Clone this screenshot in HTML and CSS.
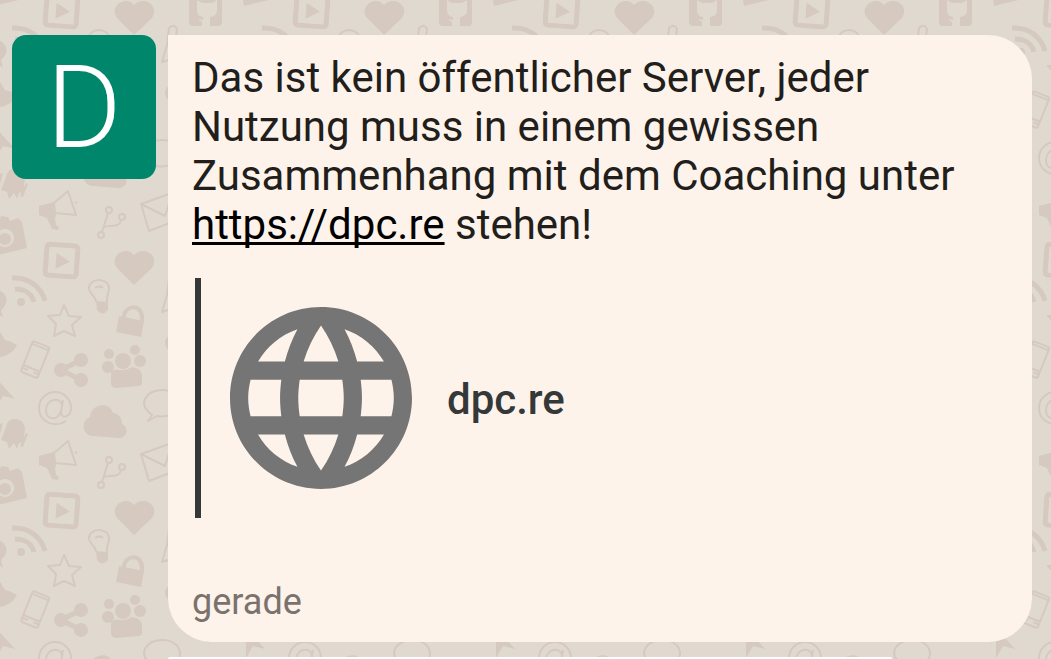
FILE: index.html
```html
<!DOCTYPE html>
<html lang="de">
<head>
    <meta charset="UTF-8">
    <meta name="viewport" content="width=device-width, initial-scale=1.0">
    <title>Chat</title>
    <link rel="stylesheet" href="styles.css">
</head>
<body>
    <svg class="wallpaper" aria-hidden="true">
        <defs>
            <g id="doodles">
                <!-- megaphone -->
                <path class="fill" d="M39 206l15-4 2 14-1 2 1 7 3 2-1 3-6-1-5-11-8-3z"/>
                <path class="line" d="M54 203l14-12 8 24-21-2zM75 202l2 1"/>
                <!-- branch -->
                <g class="line">
                    <circle cx="109" cy="210" r="3"/>
                    <circle cx="122" cy="217" r="3"/>
                    <circle cx="101" cy="235" r="3"/>
                    <path d="M108 213l-6 19M104 227c5-2 16 1 17-7"/>
                </g>
                <!-- envelope -->
                <path class="line" d="M141 204l31-11 8 26-31 12zM141 204l24 12 7-23"/>
                <!-- camera -->
                <path class="fill" fill-rule="evenodd" d="M-11 224l10-3 2-5 7 1 2 4 8-3 4 4 5 26-33 8zM5 229a9 9 0 1 0 .1 0zM5 233a6 6 0 1 1-.1 0z"/>
                <!-- play -->
                <g transform="rotate(4 61 261)">
                    <rect class="thick" x="46" y="245" width="31" height="31" rx="3"/>
                    <path class="fill" d="M56 253v16l14-8z"/>
                </g>
                <!-- heart -->
                <path class="fill" d="M134 285l-16-16c-8-9 0-18 8-18 4 0 6 2 8 4 3-3 5-4 9-4 8 0 15 8 9 17z"/>
                <!-- wifi -->
                <path class="thick" d="M12 278c17-1 29 9 33 23M15 289c10 0 17 5 19 13"/>
                <circle class="fill" cx="21" cy="302" r="4"/>
                <!-- bulb -->
                <path class="line" d="M96 302c0-6-7-8-7-14a10 8 0 0 1 20 0c0 6-3 8-2 14M95 288c3-2 6-2 8 0"/>
                <path class="fill" d="M96 301l12 1v8q-6 7-11 0z"/>
                <!-- lock -->
                <path class="fill" d="M119 316l25 5-3 16-25-5z"/>
                <path class="thin-thick" d="M124 318c-1-12 17-16 18-1v5"/>
                <!-- star -->
                <path class="line" d="M64 305l5 11 12 1-9 8 3 11-11-5-10 5 2-12-8-8 12-1z"/>
                <!-- phone -->
                <g transform="rotate(22 35 360)">
                    <rect class="line" x="26" y="343" width="18" height="33" rx="2"/>
                    <path class="line" d="M26 346h18M26 369h18M26 372h6M38 372h6"/>
                </g>
                <!-- share -->
                <g class="fill">
                    <circle cx="61" cy="370" r="7"/>
                    <circle cx="81" cy="360" r="7"/>
                    <circle cx="81" cy="380" r="7"/>
                </g>
                <path class="thick" d="M81 360l-20 10 20 10"/>
                <!-- people -->
                <g class="fill">
                    <circle cx="123" cy="361" r="8"/>
                    <circle cx="109" cy="354" r="5"/>
                    <circle cx="135" cy="350" r="5"/>
                    <circle cx="108" cy="367" r="6"/>
                    <circle cx="140" cy="361" r="6"/>
                    <path d="M111 373q2-5 9-3 6 1 12-3 9 1 10 8v8q0 3-4 3l-21 2q-5 0-6-4z"/>
                </g>
                <!-- at -->
                <path class="line" d="M66 421c-12 8-27 0-27-13a16 16 0 0 1 32 0c0 9-10 12-10 4l2-12M62 405c-2-9-16-6-16 5 0 11 12 11 15 1"/>
                <!-- cloud -->
                <path class="fill" d="M90 417c0-12 19-17 23-4 5 0 9 4 9 11 8 4 5 14-3 14l-26-2c-12-1-12-16-3-19z"/>
                <!-- bubble -->
                <path class="line" d="M152 415c-16-12-5-25 11-25s23 16 11 23q-9 5-17 3l-9 5z"/>
                <!-- robot -->
                <path class="fill" d="M6 427q2-9 9-8 9 0 10 10l-2 13-4 1-2 6-3-6-5 6-2-7-6-2zM-1 424l4-1-4 15-5-2zM26 433l2 1-5 13-3-1zM7 425l18 4-1 1-18-4z"/>
                <!-- puzzle -->
                <path class="fill" d="M-9 296q9-11 15 1 2 7-5 13l2 8-10-8q-7-7-2-14z"/>
                <!-- boat -->
                <path class="fill" d="M-9 347l8-17 6 10q6 1 12 5-5 10-17 12z"/>
                <!-- pointer -->
                <path class="fill" d="M-4 378l19 21-12-3-7 12z"/>
                <!-- cat badge -->
                <path class="fill" fill-rule="evenodd" d="M189 246q0-5 5-5h23q5 0 5 5v26q0 4-4 4h-8v-9q8-1 7-9v-8l-5 3h-10l-5-3v10q0 6 6 7v3l-4-1v1l3 2v4h-9q-4 0-4-4z"/>
                <!-- flask -->
                <path class="line" d="M169 278q5-5 8 1l-1 8 8 18-22 7 5-17z"/>
                <!-- coin -->
                <circle class="fill" cx="173" cy="343" r="8"/>
            </g>
            <pattern id="tile" width="250" height="250" patternUnits="userSpaceOnUse">
                <use href="#doodles"/>
                <use href="#doodles" x="250"/>
                <use href="#doodles" y="-250"/>
                <use href="#doodles" x="250" y="-250"/>
            </pattern>
        </defs>
        <rect width="100%" height="100%" fill="url(#tile)"/>
    </svg>
    <main class="chat">
        <article class="message">
            <div class="avatar">D</div>
            <div class="bubble">
                <p class="text">Das ist kein öffentlicher Server, jeder Nutzung muss in einem gewissen Zusammenhang mit dem Coaching unter <a href="https://dpc.re">https://dpc.re</a> stehen!</p>
                <div class="preview">
                    <svg class="globe" viewBox="2 2 20 20" aria-hidden="true">
                        <path d="M11.99 2C6.47 2 2 6.48 2 12s4.47 10 9.99 10C17.52 22 22 17.52 22 12S17.52 2 11.99 2zm6.93 6h-2.95c-.32-1.25-.78-2.45-1.38-3.56 1.84.63 3.37 1.91 4.33 3.56zM12 4.04c.83 1.2 1.48 2.53 1.91 3.96h-3.82c.43-1.43 1.08-2.76 1.91-3.96zM4.26 14C4.1 13.36 4 12.69 4 12s.1-1.36.26-2h3.38c-.08.66-.14 1.32-.14 2s.06 1.34.14 2H4.26zm.82 2h2.95c.32 1.25.78 2.45 1.38 3.56-1.84-.63-3.37-1.9-4.33-3.56zm2.95-8H5.08c.96-1.66 2.49-2.93 4.33-3.56C8.81 5.55 8.35 6.75 8.03 8zM12 19.96c-.83-1.2-1.48-2.53-1.91-3.96h3.82c-.43 1.43-1.08 2.76-1.91 3.96zM14.34 14H9.66c-.09-.66-.16-1.32-.16-2s.07-1.35.16-2h4.68c.09.65.16 1.32.16 2s-.07 1.34-.16 2zm.25 5.56c.6-1.11 1.06-2.31 1.38-3.56h2.95c-.96 1.65-2.49 2.93-4.33 3.56zM16.36 14c.08-.66.14-1.32.14-2s-.06-1.34-.14-2h3.38c.16.64.26 1.31.26 2s-.1 1.36-.26 2h-3.38z"/>
                    </svg>
                    <span class="preview-title">dpc.re</span>
                </div>
                <time class="time">gerade</time>
            </div>
        </article>
        <div class="next"></div>
    </main>
</body>
</html>
```
FILE: styles.css
```css
* {
    box-sizing: border-box;
}
body {
    margin: 0;
    background-color: #e0d9cf;
    font-family: Roboto, sans-serif;
    color: #211e1b;
}

/* wallpaper */
.wallpaper {
    position: absolute;
    top: 0;
    left: 0;
    width: 100%;
    height: 100%;
    z-index: -1;
}
.fill {
    fill: #d5c9c0;
}
.line, .thick, .thin-thick {
    fill: none;
    stroke: #d5c9c0;
    stroke-width: 2;
    stroke-linejoin: round;
}
.thick {
    stroke-width: 5;
}
.thin-thick {
    stroke-width: 4;
}

/* messages */
.chat {
    display: flex;
    flex-direction: column;
    gap: 15px;
    height: 100vh;
    padding: 35px 19px 0 12px;
    overflow: hidden;
}
.message {
    display: flex;
    flex: none;
    align-items: flex-start;
    gap: 12px;
}
.avatar {
    display: flex;
    justify-content: center;
    align-items: center;
    flex: none;
    width: 144px;
    height: 144px;
    padding-top: 2px;
    border-radius: 14px;
    background-color: #00866a;
    color: #fff;
    font-size: 115px;
    font-weight: 300;
    line-height: 142px;
}
.bubble {
    flex: 1;
    padding: 18px 24px 16px;
    border-radius: 0 44px 44px 44px;
    background-color: #fef3ea;
}
.text {
    margin: 0;
    font-size: 42px;
    line-height: 49px;
}
.text a {
    color: #000;
    text-decoration-thickness: 3px;
    text-underline-offset: 3px;
    text-decoration-skip-ink: none;
}
.preview {
    display: flex;
    align-items: center;
    gap: 35px;
    height: 240px;
    margin: 29px 0 60px 3px;
    padding-left: 29px;
    border-left: 6px solid #353838;
}
.globe {
    width: 182px;
    height: 182px;
    fill: #757575;
}
.preview-title {
    padding-top: 2px;
    font-size: 42px;
    font-weight: 500;
    color: #353838;
}
.time {
    display: block;
    font-size: 36px;
    line-height: 48px;
    color: #7a726d;
}
/* start of the following message */
.next {
    flex: 1;
    width: 71%;
    margin-left: 156px;
    border-radius: 14px 14px 0 0;
    background-color: #fff;
}
```
